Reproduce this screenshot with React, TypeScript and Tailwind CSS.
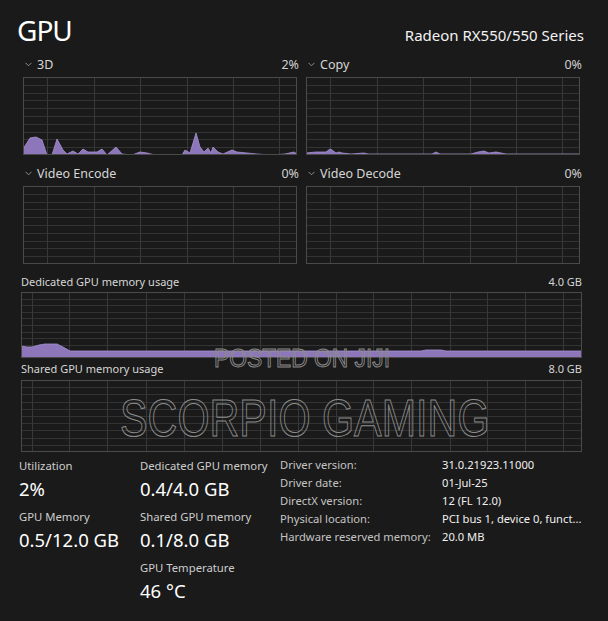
import React from "react";

type GraphProps = {
  w: number;
  h: number;
  vx: number[];
  rows: number;
  d?: string;
};

function Graph({ w, h, vx, rows, d }: GraphProps) {
  const hs = Array.from({ length: rows - 1 }, (_, i) => Math.round(((i + 1) * h) / rows) + 0.5);
  return (
    <svg width={w} height={h} viewBox={`0 0 ${w} ${h}`} className="block">
      {hs.map((y, i) => (
        <line key={"h" + i} x1={0} x2={w} y1={y} y2={y} stroke="#333333" strokeWidth={1} />
      ))}
      {vx.map((x, i) => (
        <line key={"v" + i} x1={x + 0.5} x2={x + 0.5} y1={0} y2={h} stroke="#383838" strokeWidth={1} />
      ))}
      {d && <path d={d} fill="#8d76ba" stroke="#a892d4" strokeWidth={0.8} strokeLinejoin="round" />}
      <rect x={0.5} y={0.5} width={w - 1} height={h - 1} fill="none" stroke="#4a4a4a" strokeWidth={1} />
    </svg>
  );
}

function pts(list: number[][], w: number, h: number) {
  return `M0,${h} ` + list.map(([x, y]) => `L${x},${y}`).join(" ") + ` L${w},${h} Z`;
}

const threeD = pts(
  [
    [0, 72], [7, 61], [13, 60], [19, 63], [24, 78], [29, 78], [34, 62], [40, 73], [44, 77], [50, 74],
    [55, 77], [60, 72], [65, 75], [74, 75], [79, 72], [84, 78], [93, 70], [99, 77], [109, 78], [117, 75],
    [124, 76], [132, 78], [159, 78], [162, 73], [167, 76], [173, 56], [177, 70], [181, 75], [185, 71],
    [188, 76], [190, 70], [195, 75], [200, 77], [209, 73], [214, 75], [224, 76], [234, 77], [247, 78],
    [262, 77], [271, 75], [274, 77],
  ],
  274,
  78
);

const copy = pts(
  [
    [0, 76], [10, 75], [20, 75], [24, 72], [26, 73], [30, 76], [33, 75], [36, 76], [45, 77], [58, 76],
    [62, 77], [80, 77], [126, 77], [130, 75], [134, 77], [165, 77], [172, 75], [178, 74], [183, 76],
    [190, 75], [195, 76], [200, 77], [220, 77], [274, 77],
  ],
  274,
  78
);

const dedicated = pts(
  [
    [0, 54], [6, 55], [11, 55], [18, 53], [24, 52], [36, 52], [42, 55], [49, 59], [400, 59], [405, 58],
    [420, 58], [425, 59], [561, 59],
  ],
  561,
  66
);

const engineV = [24, 71, 117, 164, 210, 256];
const memV = [11, 48, 86, 125, 163, 201, 239, 277, 315, 352, 390, 429, 466, 504, 542];

function Chevron() {
  return (
    <svg width="7" height="5" viewBox="0 0 7 5" className="block">
      <polyline points="0.5,0.8 3.5,3.8 6.5,0.8" fill="none" stroke="#9a9a9a" strokeWidth="0.9" />
    </svg>
  );
}

function Engine({ label, pct, d }: { label: string; pct: string; d?: string }) {
  return (
    <div className="flex flex-col">
      <div className="h-[20px] flex items-center justify-between text-[12.5px] leading-[17px] text-[#d6d6d6]">
        <div className="flex items-center">
          <div className="ml-[2px] mr-[5px]">
            <Chevron />
          </div>
          <span>{label}</span>
        </div>
        <span className="-mr-[2px] text-[#cfcfcf]">{pct}</span>
      </div>
      <div className="mt-[3px]">
        <Graph w={274} h={78} vx={engineV} rows={10} d={d} />
      </div>
    </div>
  );
}

function Stat({ label, value }: { label: string; value: string }) {
  return (
    <div className="flex flex-col">
      <div className="text-[11.3px] leading-[17px] text-[#cdcdcd] whitespace-nowrap">{label}</div>
      <div className="mt-[2px] text-[18.5px] leading-[25px] text-white whitespace-nowrap">{value}</div>
    </div>
  );
}

export default function App() {
  const rows: [string, string][] = [
    ["Driver version:", "31.0.21923.11000"],
    ["Driver date:", "01-Jul-25"],
    ["DirectX version:", "12 (FL 12.0)"],
    ["Physical location:", "PCI bus 1, device 0, funct..."],
    ["Hardware reserved memory:", "20.0 MB"],
  ];
  return (
    <div className="w-[608px] h-[621px] bg-[#1a1a1a] text-white font-['Noto_Sans',sans-serif] relative overflow-hidden">
      <div className="flex items-baseline justify-between pl-[17px] pr-[24px] pt-[12px]">
        <div className="text-[28px] leading-[36px] tracking-[-1px] text-white">GPU</div>
        <div className="text-[15px] leading-[20px] text-[#f2f2f2]">Radeon RX550/550 Series</div>
      </div>

      <div className="grid grid-cols-[274px_274px] gap-x-[9px] gap-y-[8px] pl-[23px] mt-[6px]">
        <Engine label="3D" pct="2%" d={threeD} />
        <Engine label="Copy" pct="0%" d={copy} />
        <Engine label="Video Encode" pct="0%" />
        <Engine label="Video Decode" pct="0%" />
      </div>

      <div className="pl-[21px] pr-[26px] mt-[9px] flex flex-col">
        <div className="h-[18px] flex items-center justify-between text-[11px] leading-[18px] text-[#d6d6d6]">
          <span>Dedicated GPU memory usage</span>
          <span>4.0 GB</span>
        </div>
        <div className="mt-[1px]">
          <Graph w={561} h={66} vx={memV} rows={10} d={dedicated} />
        </div>
        <div className="mt-[2px] h-[18px] flex items-center justify-between text-[11px] leading-[18px] text-[#d6d6d6]">
          <span>Shared GPU memory usage</span>
          <span>8.0 GB</span>
        </div>
        <div className="mt-[2px]">
          <Graph w={561} h={72} vx={memV} rows={10} />
        </div>
      </div>

      <div className="flex items-start pl-[19px] mt-[5px]">
        <div className="w-[121px] flex flex-col gap-[7px]">
          <Stat label="Utilization" value="2%" />
          <Stat label="GPU Memory" value="0.5/12.0 GB" />
        </div>
        <div className="w-[140px] flex flex-col gap-[7px]">
          <Stat label="Dedicated GPU memory" value="0.4/4.0 GB" />
          <Stat label="Shared GPU memory" value="0.1/8.0 GB" />
          <Stat label="GPU Temperature" value="46 °C" />
        </div>
        <div className="grid grid-cols-[162px_auto] text-[11.2px] leading-[18px] mt-[-1px]">
          {rows.map(([k, v]) => (
            <React.Fragment key={k}>
              <div className="text-[#c4c4c4] whitespace-nowrap">{k}</div>
              <div className="text-[#f0f0f0] whitespace-nowrap">{v}</div>
            </React.Fragment>
          ))}
        </div>
      </div>

      <div className="absolute left-[214px] top-[340px] text-[26.5px] leading-[36px] font-['Liberation_Sans',sans-serif] text-transparent [-webkit-text-stroke:1px_#8c8c8c] origin-left scale-x-[0.86] whitespace-nowrap">
        POSTED ON JIJI
      </div>
      <div className="absolute left-[120px] top-[386px] text-[51px] leading-[66px] font-['Liberation_Sans',sans-serif] text-transparent [-webkit-text-stroke:1px_#8c8c8c] origin-left scale-x-[0.81] whitespace-nowrap">
        SCORPIO GAMING
      </div>
    </div>
  );
}
